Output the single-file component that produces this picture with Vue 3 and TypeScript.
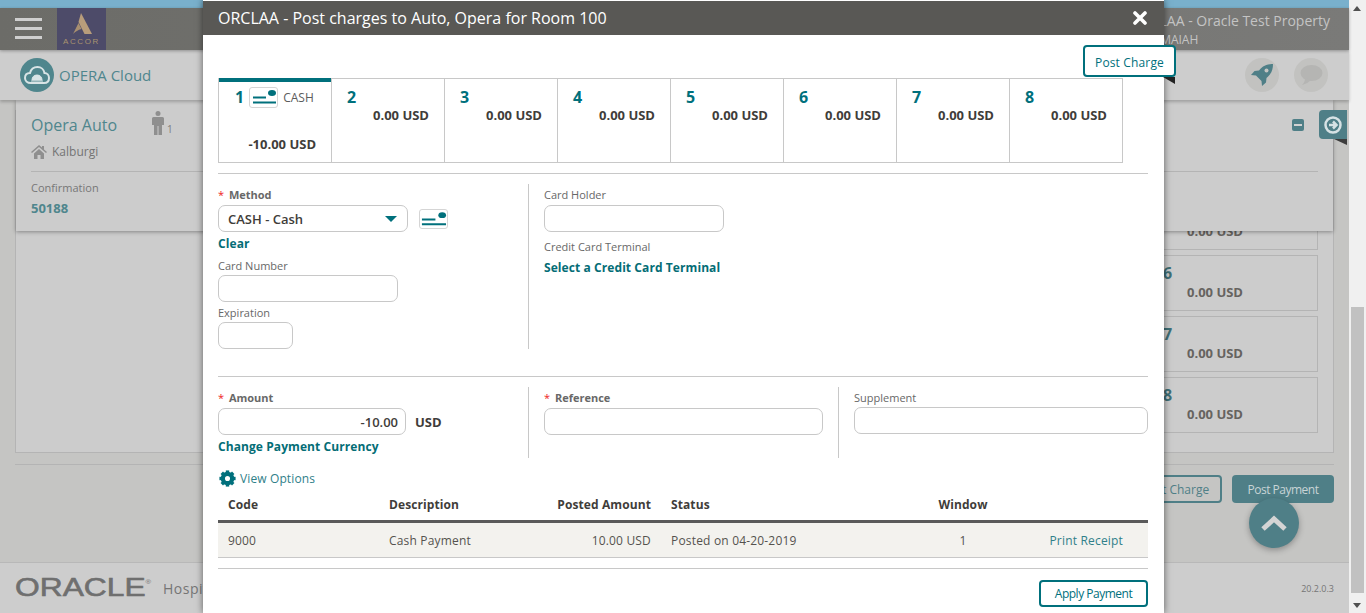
<script setup lang="ts">
const tabs = [2, 3, 4, 5, 6, 7, 8]
const windows = ['5', '6', '7', '8']
const cogAngles = [0, 45, 90, 135, 180, 225, 270, 315]
</script>

<template>
  <div class="page">
    <div class="main">
      <div class="strip"></div>
      <header class="topbar">
        <div class="burger"><span></span><span></span><span></span></div>
        <div class="brand">
          <svg width="20" height="21" viewBox="0 0 20 21">
            <path d="M9 0 L20 21 H12.500 L6.500 9 Z" fill="#b89d7b" />
            <path d="M6.500 10 L9.500 16 C6 17 3.500 18.500 1 21 Z" fill="#a88f70" />
          </svg>
          <span class="brand-name">ACCOR</span>
        </div>
        <div class="prop">
          <div class="prop-name">ORCLAA - Oracle Test Property</div>
          <div class="prop-user">MAIAH</div>
        </div>
      </header>
      <div class="subbar">
        <div class="logo-circle">
          <svg width="26" height="20" viewBox="0 0 26 20" fill="none">
            <path d="M7 18 C3 18 1 15.500 1 13 C1 10 3 8 6 8 C7 4 10 2 13.500 2 C17 2 20 4.500 20.500 8 C23 8 25 10 25 13 C25 16 23 18 20 18 Z" stroke="#d8e4e6" stroke-width="2" />
            <path d="M8 15 C8 12 10 10 13 10 C16 10 18 12 18 15 Z M7 16 H19" fill="#d8e4e6" stroke="#d8e4e6" stroke-width="1" />
          </svg>
        </div>
        <span class="logo-text">OPERA Cloud</span>
        <div class="sub-actions">
          <div class="round-ico">
            <svg width="24" height="24" viewBox="0 0 24 24">
              <path fill="#4f7f87" d="M23 1 C17 1 12.500 3 9 7.500 L4.500 8 L1 12 L6 12.500 L11.500 18 L12 23 L16 19.500 L16.500 15 C21 11.500 23 7 23 1 Z" />
              <circle cx="16.500" cy="7.500" r="2" fill="#c4c4c2" />
            </svg>
          </div>
          <div class="round-ico">
            <svg width="24" height="22" viewBox="0 0 24 22">
              <ellipse cx="12.500" cy="9" rx="11" ry="8" fill="#b5b5b3" />
              <path d="M6 14 C6 17 5 19 3 21 C7 20 10 18 12 16 Z" fill="#b5b5b3" />
            </svg>
          </div>
        </div>
      </div>

      <main class="content">
        <section class="panel">
          <div v-for="w in windows" :key="w" class="win">
            <span class="win-num">{{ w }}</span>
            <span class="win-amt">0.00 USD</span>
          </div>
        </section>
        <div class="actions">
          <button class="btn-outline">Post Charge</button>
          <button class="btn-fill">Post Payment</button>
        </div>

        <div class="guest-card">
          <div class="guest-top">
            <div>
              <div class="guest-name">Opera Auto</div>
              <div class="guest-city">
                <svg width="16" height="14" viewBox="0 0 16 14"><path fill="#8f8f8f" d="M8 0 L0 7 L1 8 L8 2 L15 8 L16 7 L13 4.400 V1 H11 V2.600 Z M3 8.500 V14 H6.500 V10 H9.500 V14 H13 V8.500 L8 4 Z" /></svg>
                Kalburgi
              </div>
            </div>
            <div class="guest-count">
              <svg width="12" height="24" viewBox="0 0 12 24"><circle cx="6" cy="2.500" r="2.500" fill="#8f8f8f" /><path fill="#8f8f8f" d="M1.500 6 H10.500 Q12 6 12 7.500 V14 H10 V24 H6.500 V15 H5.500 V24 H2 V14 H0 V7.500 Q0 6 1.500 6 Z" /></svg>
              <span>1</span>
            </div>
          </div>
          <div class="guest-rule"></div>
          <div class="guest-label">Confirmation</div>
          <div class="guest-conf">50188</div>
          <div class="minus"><span></span></div>
        </div>
        <div class="side-tab">
          <svg width="18" height="18" viewBox="0 0 18 18">
            <circle cx="9" cy="9" r="7.500" fill="none" stroke="#d6e2e4" stroke-width="2.500" />
            <path d="M5 9 H12 M9 5.500 L12.500 9 L9 12.500" fill="none" stroke="#d6e2e4" stroke-width="2.500" />
          </svg>
        </div>
        <div class="side-fold"></div>
        <div class="to-top">
          <svg width="28" height="18" viewBox="0 0 28 18"><path d="M3 15 L14 5 L25 15" fill="none" stroke="#d4d4d4" stroke-width="5" /></svg>
        </div>
      </main>

      <footer class="foot">
        <span class="oracle-wrap"><span class="oracle">ORACLE<sup>®</sup></span></span>
        <span class="hosp">Hospitality</span>
        <span class="version">20.2.0.3</span>
      </footer>
    </div>

    <div class="scrollbar">
      <span class="arrow up"></span>
      <div class="thumb"></div>
      <span class="arrow down"></span>
    </div>

    <div class="modal">
      <div class="modal-head">
        <span>ORCLAA - Post charges to Auto, Opera for Room 100</span>
        <svg width="14" height="14" viewBox="0 0 14 14"><path d="M2 2 L12 12 M12 2 L2 12" stroke="#fff" stroke-width="3.600" stroke-linecap="round" /></svg>
      </div>
      <button class="post-charge">Post Charge</button>
      <div class="post-fold"></div>

      <div class="modal-body">
        <div class="tabs">
          <div class="tab first">
            <div class="tab-top">
              <span class="tab-num">1</span>
              <span class="card-ico">
                <svg width="26" height="18" viewBox="0 0 26 18"><path d="M2 9.500 H15 M2 14.500 H25" stroke="#00707c" stroke-width="2" /><ellipse cx="21" cy="5" rx="4" ry="3" fill="#00707c" /></svg>
              </span>
              <span class="tab-cash">CASH</span>
            </div>
            <div class="tab-total">-10.00 USD</div>
          </div>
          <div v-for="t in tabs" :key="t" class="tab">
            <span class="tab-num">{{ t }}</span>
            <div class="tab-amt">0.00 USD</div>
          </div>
        </div>
        <div class="rule first-rule"></div>

        <div class="row-method">
          <div class="col col-left">
            <label class="lbl strong"><i>*</i> Method</label>
            <div class="method-line">
              <div class="select">
                <span>CASH - Cash</span>
                <span class="caret"></span>
              </div>
              <span class="card-ico big">
                <svg width="28" height="18" viewBox="0 0 28 18"><path d="M2 9.500 H16 M2 14.500 H27" stroke="#00707c" stroke-width="2" /><ellipse cx="23" cy="5" rx="4" ry="3" fill="#00707c" /></svg>
              </span>
            </div>
            <a class="link clear">Clear</a>
            <label class="lbl card-lbl">Card Number</label>
            <div class="input w180"></div>
            <label class="lbl exp-lbl">Expiration</label>
            <div class="input w75"></div>
          </div>
          <div class="col col-right">
            <label class="lbl">Card Holder</label>
            <div class="input w180 holder"></div>
            <label class="lbl term-lbl">Credit Card Terminal</label>
            <a class="link term">Select a Credit Card Terminal</a>
          </div>
        </div>
        <div class="rule second-rule"></div>

        <div class="row-amount">
          <div class="col">
            <label class="lbl strong"><i>*</i> Amount</label>
            <div class="amount-line">
              <div class="input w188 amount">-10.00</div>
              <span class="cur">USD</span>
            </div>
            <a class="link change">Change Payment Currency</a>
          </div>
          <div class="col col-ref">
            <label class="lbl strong"><i>*</i> Reference</label>
            <div class="input fill"></div>
          </div>
          <div class="col col-sup">
            <label class="lbl">Supplement</label>
            <div class="input fill sup"></div>
          </div>
        </div>

        <div class="options">
          <svg width="17" height="17" viewBox="0 0 20 20">
            <circle cx="10" cy="10" r="5.500" fill="none" stroke="#00707c" stroke-width="5" />
            <rect v-for="a in cogAngles" :key="a" x="8" y="0.500" width="4" height="4" fill="#00707c" :transform="`rotate(${a} 10 10)`" />
          </svg>
          <span>View Options</span>
        </div>

        <div class="tbl tbl-head">
          <span>Code</span>
          <span>Description</span>
          <span class="right">Posted Amount</span>
          <span>Status</span>
          <span class="center">Window</span>
          <span></span>
        </div>
        <div class="tbl tbl-row">
          <span>9000</span>
          <span>Cash Payment</span>
          <span class="right">10.00 USD</span>
          <span>Posted on 04-20-2019</span>
          <span class="center">1</span>
          <a class="receipt">Print Receipt</a>
        </div>
        <div class="rule third-rule"></div>
        <div class="modal-foot">
          <button class="apply">Apply Payment</button>
        </div>
      </div>
    </div>
  </div>
</template>

<style>
html, body {
  margin: 0;
  overflow: hidden;
}
</style>

<style scoped>
.page {
  position: relative;
  display: flex;
  width: 1366px;
  height: 100vh;
  overflow: hidden;
  font-family: "Open Sans", "Noto Sans", sans-serif;
  color: #3f3d3a;
}

.main {
  flex: 1;
  min-width: 0;
  display: flex;
  flex-direction: column;
  background: #c5c5c3;
}

.strip {
  height: 8px;
  background: #79b0cc;
}

.topbar {
  height: 42px;
  display: flex;
  background: linear-gradient(90deg, #6c6c68, #7a7a78);
  box-shadow: 0 1px 3px rgba(0, 0, 0, 0.3);
  z-index: 2;
}

.burger {
  width: 27px;
  margin: 10px 15px 0;
  display: flex;
  flex-direction: column;
  gap: 6px;
}

.burger span {
  height: 3px;
  background: #cfcfcf;
}

.brand {
  width: 49px;
  background: #4d4b69;
  display: flex;
  flex-direction: column;
  align-items: center;
  padding-top: 5px;
  box-sizing: border-box;
}

.brand-name {
  font-size: 8px;
  line-height: 10px;
  letter-spacing: 1.6px;
  color: #a9936f;
  font-family: "Liberation Sans", sans-serif;
  margin-top: 3px;
}

.prop {
  margin-left: auto;
  margin-right: 19px;
  color: #c4c4c4;
}

.prop-name {
  font-size: 14px;
  line-height: 20px;
  margin-top: 3px;
  white-space: nowrap;
}

.prop-user {
  font-size: 12px;
  line-height: 16px;
  margin-top: 1px;
  padding-left: 29px;
}

.subbar {
  height: 50px;
  background: #cdcdcd;
  display: flex;
  align-items: center;
  padding: 0 20px;
  box-shadow: 0 2px 3px rgba(0, 0, 0, 0.22);
  z-index: 1;
}

.logo-circle {
  width: 34px;
  height: 34px;
  border-radius: 50%;
  background: #4f868d;
  display: flex;
  align-items: center;
  justify-content: center;
}

.logo-text {
  margin-left: 5px;
  font-size: 15px;
  color: #4f868d;
}

.sub-actions {
  margin-left: auto;
  display: flex;
  gap: 15px;
  margin-right: 1px;
}

.round-ico {
  width: 34px;
  height: 34px;
  border-radius: 50%;
  background: #c2c2c0;
  display: flex;
  align-items: center;
  justify-content: center;
}

.content {
  flex: 1;
  position: relative;
  min-height: 0;
  padding: 0 15px;
}

.panel {
  margin-top: 10px;
  height: 343px;
  box-sizing: border-box;
  border: 1px solid #b4b4b4;
  background: #cccccc;
  display: flex;
  flex-direction: column;
  justify-content: flex-end;
  align-items: flex-end;
  gap: 5px;
  padding: 0 15px 19px 0;
}

.win {
  flex: none;
  width: 170px;
  height: 56px;
  box-sizing: border-box;
  border: 1px solid #b4b4b4;
  padding: 7px 74px 0 14px;
  display: flex;
  flex-direction: column;
}

.win-num {
  font-size: 16px;
  font-weight: 700;
  line-height: 20px;
  color: #3f6f76;
}

.win-amt {
  font-size: 13px;
  font-weight: 700;
  line-height: 18px;
  text-align: right;
  white-space: nowrap;
  color: #66635f;
}

.actions {
  margin-top: 11px;
  padding-top: 10px;
  border-top: 1px solid #b4b4b4;
  display: flex;
  justify-content: flex-end;
  gap: 10px;
}

.actions button {
  height: 28px;
  border-radius: 4px;
  font: 12px "Open Sans", sans-serif;
  padding: 0;
}

.btn-outline {
  width: 93px;
  background: none;
  border: 2px solid #4f7f87;
  color: #4f7f87;
}

.btn-fill {
  width: 102px;
  background: #4f7f87;
  border: 0;
  color: #c8d4d6;
  letter-spacing: -0.5px;
}

.guest-card {
  position: absolute;
  left: 16px;
  top: 0;
  width: 1317px;
  height: 131px;
  box-sizing: border-box;
  background: #cccccc;
  box-shadow: 0 1px 4px rgba(0, 0, 0, 0.35);
  padding: 13px 15px 0;
}

.guest-top {
  display: flex;
  gap: 35px;
  height: 58px;
}

.guest-name {
  font-size: 16px;
  line-height: 24px;
  color: #4f868d;
}

.guest-city {
  margin-top: 6px;
  display: flex;
  align-items: center;
  gap: 5px;
  font-size: 12px;
  color: #747474;
}

.guest-count {
  display: flex;
  align-items: flex-end;
  height: 24px;
  margin-top: -2px;
  gap: 3px;
  font-size: 10px;
  line-height: 12px;
  color: #7c7c7c;
}

.guest-rule {
  height: 1px;
  background: #b4b4b4;
}

.guest-label {
  margin-top: 8px;
  font-size: 11px;
  line-height: 15px;
  color: #777;
}

.guest-conf {
  margin-top: 4px;
  font-size: 13px;
  font-weight: 700;
  line-height: 18px;
  color: #4f868d;
}

.minus {
  position: absolute;
  left: 1276px;
  top: 19px;
  width: 12px;
  height: 12px;
  border-radius: 2px;
  background: #4f7f87;
  display: flex;
  align-items: center;
  justify-content: center;
}

.minus span {
  width: 8px;
  height: 2px;
  background: #d2d2d2;
}

.side-tab {
  position: absolute;
  left: 1319px;
  top: 10px;
  width: 28px;
  height: 29px;
  background: #4f7f87;
  border-radius: 4px 0 0 4px;
  display: flex;
  align-items: center;
  justify-content: center;
}

.side-fold {
  position: absolute;
  left: 1334px;
  top: 39px;
  border-top: 6px solid #3d3d3d;
  border-left: 13px solid transparent;
}

.to-top {
  position: absolute;
  left: 1249px;
  top: 398px;
  width: 50px;
  height: 50px;
  border-radius: 50%;
  background: #4f7f87;
  box-shadow: 0 2px 6px rgba(0, 0, 0, 0.3);
  display: flex;
  align-items: center;
  justify-content: center;
}

.foot {
  height: 51px;
  box-sizing: border-box;
  border-top: 1px solid #b8b8b8;
  background: #cdcdcd;
  display: flex;
  align-items: center;
  padding: 0 15px;
  color: #757575;
}

.oracle-wrap {
  width: 148px;
}

.oracle {
  display: inline-block;
  font-family: "Liberation Sans", sans-serif;
  font-size: 25px;
  line-height: 25px;
  color: #6f6f6f;
  -webkit-text-stroke: 0.6px #6f6f6f;
  white-space: nowrap;
  transform: scaleX(1.27);
  transform-origin: left center;
}

.oracle sup {
  font-size: 6px;
  -webkit-text-stroke: 0;
  vertical-align: 12px;
  line-height: 0;
}

.hosp {
  font-size: 14px;
  letter-spacing: 0.5px;
}

.version {
  margin-left: auto;
  font-size: 9px;
}

.scrollbar {
  position: relative;
  width: 17px;
  background: #f0f0f0;
}

.thumb {
  position: absolute;
  left: 2px;
  right: 2px;
  top: 307px;
  height: 286px;
  background: #c1c1c1;
}

.arrow {
  position: absolute;
  left: 4px;
  border-left: 4px solid transparent;
  border-right: 4px solid transparent;
}

.arrow.up {
  top: 6px;
  border-bottom: 5px solid #505050;
}

.arrow.down {
  bottom: 5px;
  border-top: 5px solid #505050;
}

.modal {
  position: absolute;
  left: 203px;
  top: 0;
  width: 961px;
  height: 100vh;
  background: #fff;
  box-shadow: 0 0 7px rgba(0, 0, 0, 0.55);
  z-index: 5;
}

.modal-head {
  margin-top: 1px;
  height: 34px;
  box-sizing: border-box;
  background: #595855;
  color: #fff;
  display: flex;
  align-items: center;
  justify-content: space-between;
  padding: 0 17px 0 15px;
  font-size: 16px;
}

.post-charge {
  position: absolute;
  left: 880px;
  top: 45px;
  width: 93px;
  height: 32px;
  box-sizing: border-box;
  background: #fff;
  border: 2px solid #00707c;
  border-radius: 4px;
  color: #00707c;
  font: 12px "Open Sans", sans-serif;
  letter-spacing: 0.15px;
  padding: 2px 0 0;
  z-index: 3;
}

.post-fold {
  position: absolute;
  left: 960px;
  top: 77px;
  border-top: 7px solid #222;
  border-left: 12px solid transparent;
}

.modal-body {
  padding: 43px 16px 0 15px;
}

.tabs {
  display: flex;
  width: 905px;
  height: 85px;
  box-sizing: border-box;
  border: 1px solid #c8c8c8;
}

.tab {
  width: 113px;
  box-sizing: border-box;
  border-left: 1px solid #c8c8c8;
  padding: 7px 15px 0 15px;
}

.tab.first {
  width: 112px;
  border-left: 0;
  border-top: 4px solid #00707c;
  margin-top: -1px;
  padding: 3px 15px 0 16px;
}

.tab-top {
  display: flex;
  align-items: center;
  gap: 5px;
  height: 24px;
}

.tab-num {
  font-size: 16px;
  font-weight: 700;
  line-height: 20px;
  color: #00707c;
}

.card-ico {
  width: 29px;
  height: 21px;
  box-sizing: border-box;
  border: 1px solid #d5d5d5;
  border-radius: 3px;
  display: flex;
  align-items: center;
  justify-content: center;
  overflow: hidden;
}

.tab-cash {
  font-size: 12px;
  color: #5c5c5c;
}

.tab-total {
  margin-top: 26px;
  text-align: right;
  font-size: 13px;
  font-weight: 700;
  line-height: 18px;
}

.tab-amt {
  margin-top: -2px;
  text-align: right;
  font-size: 13px;
  font-weight: 700;
  line-height: 18px;
}

.rule {
  height: 1px;
  background: #c8c8c8;
}

.first-rule {
  margin-top: 10px;
}

.row-method {
  display: grid;
  grid-template-columns: 311px 1fr;
  margin-top: 10px;
  height: 165px;
}

.col {
  box-sizing: border-box;
  padding-top: 4px;
}

.col-left {
  border-right: 1px solid #c8c8c8;
}

.col-right {
  padding-left: 15px;
}

.lbl {
  display: block;
  font-size: 11px;
  line-height: 14px;
  color: #686868;
}

.lbl.strong {
  font-weight: 700;
}

.lbl i {
  color: #ee2222;
  font-style: normal;
  font-weight: 400;
  margin-right: 2px;
}

.method-line {
  display: flex;
  align-items: center;
  gap: 11px;
  margin-top: 3px;
}

.select {
  width: 190px;
  height: 27px;
  box-sizing: border-box;
  border: 1px solid #c8c8c8;
  border-radius: 7px;
  display: flex;
  align-items: center;
  justify-content: space-between;
  padding: 0 10px 0 9px;
  font-size: 13px;
  font-weight: 600;
}

.caret {
  border-top: 6px solid #00707c;
  border-left: 6px solid transparent;
  border-right: 6px solid transparent;
}

.card-ico.big {
  height: 20px;
}

.link {
  display: block;
  font-size: 12px;
  font-weight: 700;
  line-height: 14px;
  letter-spacing: 0.08px;
  color: #046d76;
  white-space: nowrap;
}

.clear {
  margin-top: 5px;
}

.card-lbl {
  margin-top: 8px;
}

.exp-lbl {
  margin-top: 4px;
}

.input {
  height: 27px;
  box-sizing: border-box;
  border: 1px solid #c8c8c8;
  border-radius: 7px;
  margin-top: 2px;
}

.holder {
  margin-top: 3px;
}

.w180 {
  width: 180px;
}

.w75 {
  width: 75px;
}

.w188 {
  width: 188px;
  margin-top: 0;
}

.fill {
  margin-top: 3px;
}

.term-lbl {
  margin-top: 8px;
}

.term {
  margin-top: 7px;
}

.second-rule {
  margin-top: 27px;
}

.row-amount {
  display: grid;
  grid-template-columns: 311px 310px 1fr;
  margin-top: 10px;
  height: 71px;
}

.amount-line {
  display: flex;
  align-items: center;
  gap: 9px;
  margin-top: 3px;
}

.amount {
  display: flex;
  align-items: center;
  justify-content: flex-end;
  padding-right: 7px;
  font-size: 13px;
  font-weight: 600;
}

.cur {
  font-size: 13px;
  font-weight: 700;
}

.change {
  margin-top: 5px;
}

.col-ref {
  border-left: 1px solid #c8c8c8;
  padding: 4px 16px 0 15px;
  margin-left: -1px;
}

.col-sup {
  border-left: 1px solid #c8c8c8;
  padding: 4px 0 0 15px;
  margin-left: -1px;
}

.sup {
  margin-top: 2px;
}

.options {
  margin-top: 12px;
  height: 16px;
  display: flex;
  align-items: center;
  gap: 4px;
  padding-left: 1px;
  font-size: 12px;
  letter-spacing: 0.12px;
  color: #2f8089;
}

.tbl {
  display: grid;
  grid-template-columns: 161px 141px 141px 239px 126px 1fr;
  font-size: 12px;
}

.tbl > span {
  padding: 0 10px;
}

.tbl .right {
  text-align: right;
}

.tbl .center {
  text-align: center;
}

.tbl-head {
  height: 37px;
  box-sizing: border-box;
  border-bottom: 3px solid #5a5a5a;
  align-items: center;
  font-weight: 700;
  letter-spacing: 0.1px;
  padding-top: 3px;
}

.tbl-row {
  height: 35px;
  box-sizing: border-box;
  background: #f3f2ee;
  border-bottom: 1px solid #c8c8c8;
  align-items: center;
  letter-spacing: 0.18px;
  color: #55524e;
}

.receipt {
  justify-self: end;
  margin-right: 25px;
  color: #2f8089;
  white-space: nowrap;
}

.third-rule {
  margin-top: 10px;
}

.modal-foot {
  display: flex;
  justify-content: flex-end;
  margin-top: 11px;
}

.apply {
  width: 109px;
  height: 27px;
  box-sizing: border-box;
  background: #fff;
  border: 2px solid #00707c;
  border-radius: 4px;
  color: #00707c;
  font: 12px "Open Sans", sans-serif;
  letter-spacing: -0.5px;
  padding: 0;
}
</style>
